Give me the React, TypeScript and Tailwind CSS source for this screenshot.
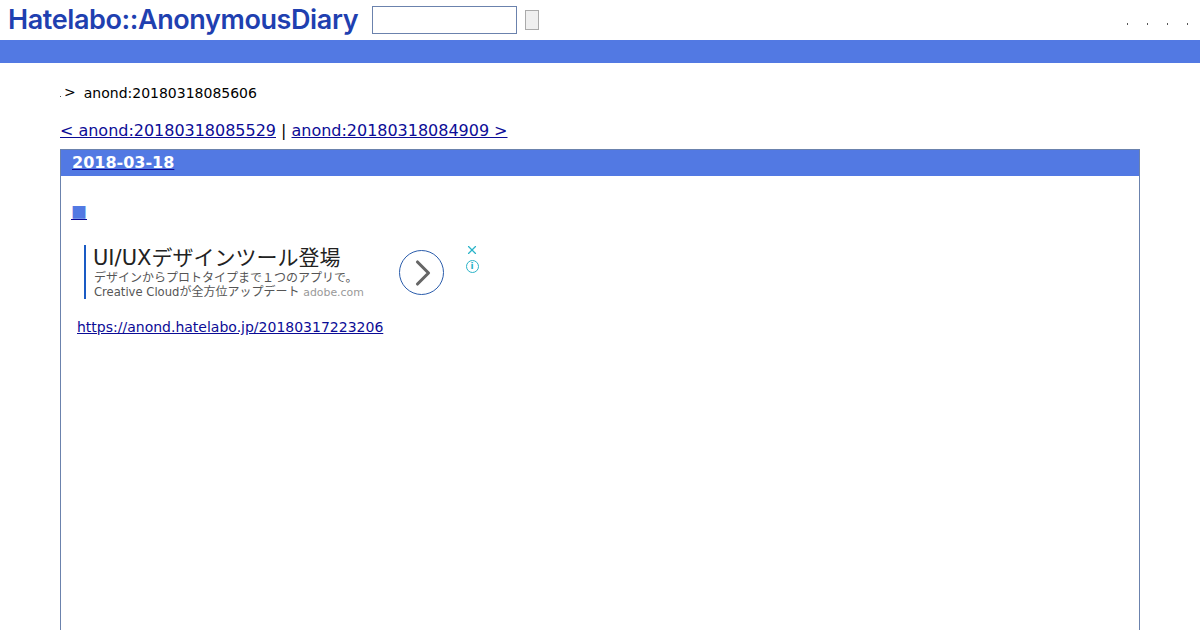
import { ChevronRight, X } from "lucide-react";

const linkClass = "text-[#0c0c96] underline";

function TopDots() {
  return (
    <div className="ml-auto flex items-center gap-[19px] pr-[12px] pt-[8px]">
      <span className="h-[2px] w-px bg-[#555]" />
      <span className="h-[2px] w-px bg-[#555]" />
      <span className="h-[2px] w-px bg-[#555]" />
      <span className="h-[2px] w-px bg-[#555]" />
    </div>
  );
}

function AdBlock() {
  return (
    <div className="ml-[23px] mt-[24px] flex h-[54px]">
      <div className="h-[54px] w-[2px] bg-[#1a5bc4]" />
      <div className="ml-[7px] flex w-[306px] flex-col whitespace-nowrap">
        <div className="text-[21px] leading-[26px] text-[#222]">UI/UXデザインツール登場</div>
        <div className="ml-px text-[12px] leading-[14px] text-[#555]">デザインからプロトタイプまで１つのアプリで。</div>
        <div className="ml-px text-[12px] leading-[14px] text-[#555]">
          <span className="text-[11.6px]">Creative Cloud</span>
          が全方位アップデート <span className="text-[10.9px] text-[#999]">adobe.com</span>
        </div>
      </div>
      <div className="mt-[5px] flex h-[45px] w-[45px] items-center justify-center rounded-full border border-[#2a5cab]">
        <ChevronRight className="ml-[2px] h-[44px] w-[44px] shrink-0 text-[#666]" strokeWidth={1.7} />
      </div>
      <div className="-mt-[2px] ml-[21px] flex flex-col items-center gap-[3px]">
        <X className="h-[14px] w-[14px] text-[#2ab3c8]" strokeWidth={2} />
        <div className="flex h-[13px] w-[13px] items-center justify-center rounded-full border border-[#2ab3c8] text-[9px] font-bold leading-none text-[#2ab3c8]">
          i
        </div>
      </div>
    </div>
  );
}

export default function App() {
  return (
    <div
      className="h-[630px] w-[1200px] overflow-hidden bg-white text-black"
      style={{ fontFamily: '"DejaVu Sans", "Noto Sans CJK JP", sans-serif' }}
    >
      {/* Header */}
      <div className="flex h-[40px] items-center">
        <div
          className="mb-[2px] ml-[8px] w-[352px] whitespace-nowrap text-[27px] font-semibold leading-none tracking-[-0.4px] text-[#1f40b0]"
          style={{ fontFamily: '"Inter", sans-serif' }}
        >
          Hatelabo::AnonymousDiary
        </div>
        <input className="ml-[12px] h-[28px] w-[145px] border border-[#6b82ad] bg-white" />
        <button className="ml-[8px] h-[20px] w-[14px] border border-[#aaa] bg-[#efefef]" />
        <TopDots />
      </div>
      <div className="h-[23px] bg-[#5279e3]" />

      {/* Breadcrumb */}
      <div className="ml-[60px] mt-[21px] flex h-[18px] items-center text-[14px] leading-[18px]">
        <span className="mt-[6px] h-px w-px bg-[#555]" />
        <span className="ml-[3px] -mt-[2px]">&gt;</span>
        <span className="ml-[8px]">anond:20180318085606</span>
      </div>

      {/* Prev / next */}
      <div className="ml-[60px] mt-[19px] text-[16px] leading-[20px] tracking-[-0.02px]">
        <a className={linkClass} href="#">&lt; anond:20180318085529</a>
        {" | "}
        <a className={linkClass} href="#">anond:20180318084909 &gt;</a>
      </div>

      {/* Day section */}
      <div className="mx-[60px] mt-[8px] h-[500px] border border-[#6b82ad]">
        <div className="h-[26px] bg-[#5279e3] pl-[11px] text-[16px] font-bold leading-[25px] text-white">
          <a className="underline decoration-[#0c0c96]" href="#">2018-03-18</a>
        </div>
        <div>
          <div
            className="ml-[10px] mt-[25px] text-[16px] leading-[20px] text-[#5279e3]"
            style={{ fontFamily: '"Noto Sans CJK JP", sans-serif' }}
          >
            <a className="underline decoration-[#0c0c96]" href="#">■</a>
          </div>
          <AdBlock />
          <div className="ml-[16px] mt-[19px] text-[14px] leading-[18px]">
            <a className={linkClass} href="#">https://anond.hatelabo.jp/20180317223206</a>
          </div>
        </div>
      </div>
    </div>
  );
}
